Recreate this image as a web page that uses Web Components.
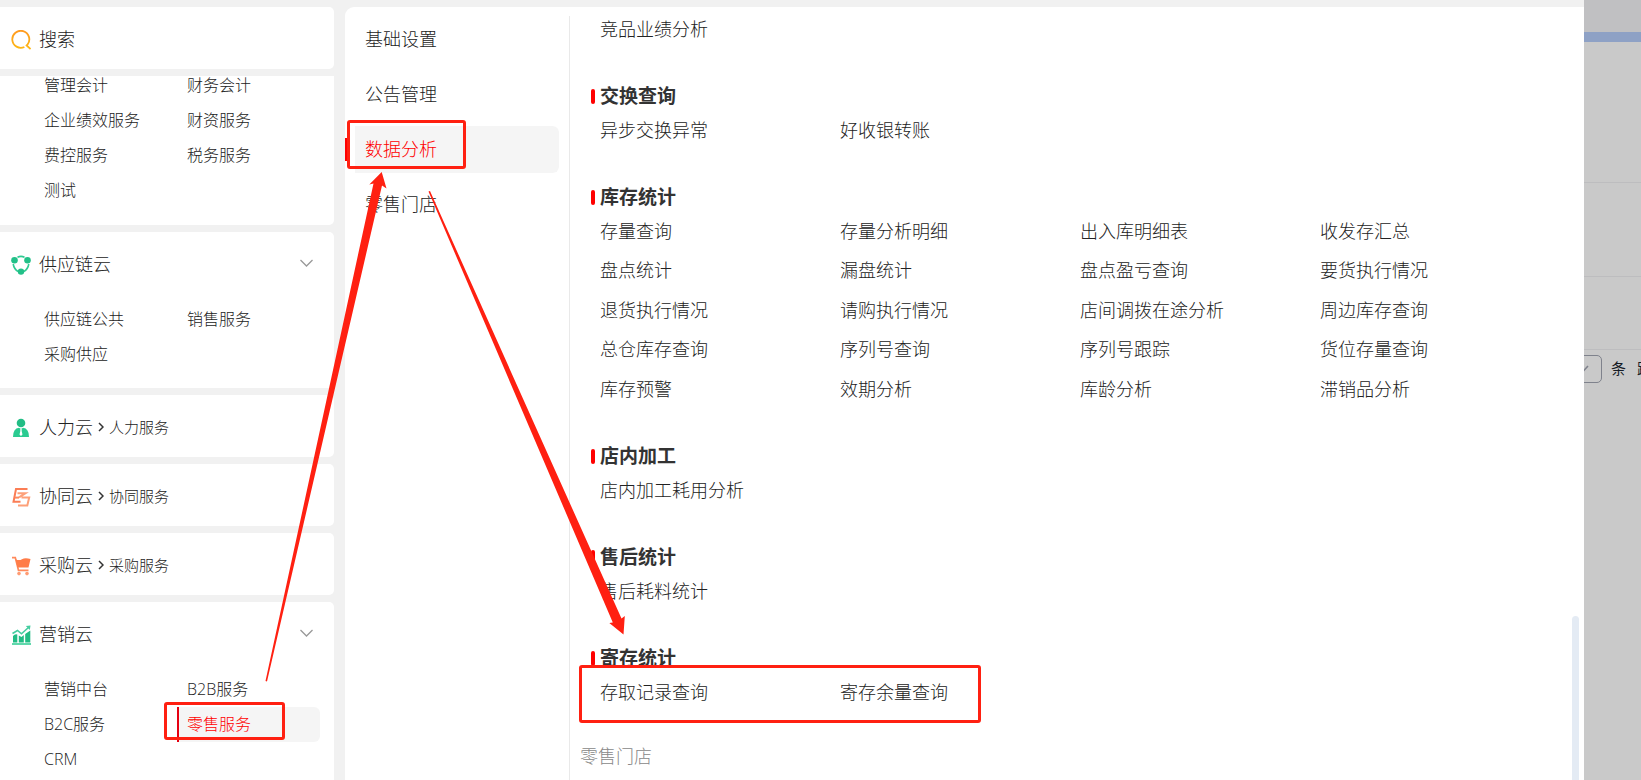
<!DOCTYPE html>
<html lang="zh-CN">
<head>
<meta charset="utf-8">
<title>数据分析</title>
<style>
    html, body { height: 100%; margin: 0; }
    body {
        display: flex;
        overflow: hidden;
        position: relative;
        background: #f1f1f1;
        color: #222;
        font-family: "Open Sans", "Noto Sans CJK SC", sans-serif;
        font-weight: 300;
        font-size: 18px;
    }
    nav-drawer { flex: 1; min-width: 0; }
</style>
</head>
<body>
<nav-drawer>
    <search-card slot="sidebar">搜索</search-card>
    <cloud-card slot="sidebar" scrolled>
        <a href="#">管理会计</a><a href="#">财务会计</a>
        <a href="#">企业绩效服务</a><a href="#">财资服务</a>
        <a href="#">费控服务</a><a href="#">税务服务</a>
        <a href="#">测试</a>
    </cloud-card>
    <cloud-card slot="sidebar" name="供应链云" icon="supply" open>
        <a href="#">供应链公共</a><a href="#">销售服务</a>
        <a href="#">采购供应</a>
    </cloud-card>
    <cloud-card slot="sidebar" name="人力云" icon="person" service="人力服务"></cloud-card>
    <cloud-card slot="sidebar" name="协同云" icon="collab" service="协同服务"></cloud-card>
    <cloud-card slot="sidebar" name="采购云" icon="cart" service="采购服务"></cloud-card>
    <cloud-card slot="sidebar" name="营销云" icon="chart" open>
        <a href="#">营销中台</a><a href="#">B2B服务</a>
        <a href="#">B2C服务</a><a href="#" class="active">零售服务</a>
        <a href="#">CRM</a>
    </cloud-card>

    <side-menu slot="menu">
        <a href="#">基础设置</a>
        <a href="#">公告管理</a>
        <a href="#" class="active">数据分析</a>
        <a href="#">零售门店</a>
    </side-menu>

    <menu-section>
        <a href="#">竞品业绩分析</a>
    </menu-section>
    <menu-section heading="交换查询">
        <a href="#">异步交换异常</a><a href="#">好收银转账</a>
    </menu-section>
    <menu-section heading="库存统计">
        <a href="#">存量查询</a><a href="#">存量分析明细</a><a href="#">出入库明细表</a><a href="#">收发存汇总</a>
        <a href="#">盘点统计</a><a href="#">漏盘统计</a><a href="#">盘点盈亏查询</a><a href="#">要货执行情况</a>
        <a href="#">退货执行情况</a><a href="#">请购执行情况</a><a href="#">店间调拨在途分析</a><a href="#">周边库存查询</a>
        <a href="#">总仓库存查询</a><a href="#">序列号查询</a><a href="#">序列号跟踪</a><a href="#">货位存量查询</a>
        <a href="#">库存预警</a><a href="#">效期分析</a><a href="#">库龄分析</a><a href="#">滞销品分析</a>
    </menu-section>
    <menu-section heading="店内加工">
        <a href="#">店内加工耗用分析</a>
    </menu-section>
    <menu-section heading="售后统计">
        <a href="#">售后耗料统计</a>
    </menu-section>
    <menu-section heading="寄存统计">
        <a href="#">存取记录查询</a><a href="#">寄存余量查询</a>
    </menu-section>
    <group-title>零售门店</group-title>
</nav-drawer>
<page-behind></page-behind>
<mark-layer></mark-layer>

<script>
const ICONS = {
    search: `
        <defs><linearGradient id="s" x2="0" y2="1"><stop stop-color="#ff9a1f"/><stop offset="1" stop-color="#fdb713"/></linearGradient></defs>
        <path d="M13.4 17A8.5 8.5 0 1 1 16.6 14.4L15.6 15.4L19.6 19" fill="none" stroke="url(#s)" stroke-width="1.8"/>`,
    supply: `
        <path d="M6.500 2.300Q10 .5 13.500 2.300M2.200 9Q3 14 7 16.500M17.800 9Q17 14 13 16.500" fill="none" stroke="#2fcb93" stroke-width="1.600"/>
        <circle cx="3.500" cy="5.300" r="3.300" fill="#22c088"/><circle cx="16.500" cy="5.300" r="3.300" fill="#22c088"/><circle cx="10" cy="16.600" r="3.200" fill="#22c088"/>`,
    person: `
        <circle cx="10" cy="5" r="4.300" fill="#22bd85"/>
        <path d="M2 19Q2 10.500 8 9.800L10 11L12 9.800Q18 10.500 18 19Z" fill="#2bcb91"/>
        <path d="M9 11.300H11L10.600 12.800L11.500 16.500L10 18L8.500 16.500L9.400 12.800Z" fill="#fff"/>`,
    collab: `
        <g fill="none" stroke-width="2"><path d="M16.500 2H5L2.500 14.800H9.500" stroke="#fb7d55"/>
        <path d="M6.500 6.200H14.500L8 10.400M10.500 10.400H18.200L16.300 18.500H7" stroke="#fda078"/><path d="M4 10.600H8" stroke="#fb8a60"/></g>`,
    cart: `
        <path d="M1 1.600H4.300L7.500 14.400H17.500" fill="none" stroke="#ff8a5c" stroke-width="1.700"/>
        <path d="M4.500 3.200Q8 5 11 3.200T19.500 3L17.500 11.500H6.500Z" fill="#ff7c48"/>
        <circle cx="8" cy="17.600" r="1.800" fill="#ff9c74"/><circle cx="16" cy="17.600" r="1.800" fill="#ff9c74"/>`,
    chart: `
        <path d="M1 19H20" stroke="#2bcb91" stroke-width="1.500"/>
        <path d="M2 11Q4 8.500 6.300 9.500V17.500H2ZM7.800 10.500L10.500 12L12.800 10V17.500H7.800ZM14.200 9L19.300 5.500V17.500H14.200Z" fill="#22bd85"/>
        <path d="M1.500 8.500L6.500 5.500L10.500 8.800L18 2" fill="none" stroke="#45cda0" stroke-width="1.600"/>
        <path d="M14.800 1L19.500 .5L18.800 5Z" fill="#45cda0"/>`
};

const icon = (name) => `<svg class="icon" width="20" height="20" viewBox="0 0 20 20" aria-hidden="true">${ICONS[name]}</svg>`;

const HEADER_STYLE = `
    :host { display: block; flex: none; background: #fff; border-radius: 0 5px 5px 0; }
    .header {
        display: flex;
        align-items: center;
        box-sizing: border-box;
        width: 100%;
        height: 62px;
        padding: 0 21px 0 11px;
        border: 0;
        background: none;
        color: inherit;
        font: inherit;
        text-align: left;
    }
    .icon { flex: none; margin: 4px 8px 0 0; }
`;

class NavDrawer extends HTMLElement {
    constructor() {
        super();
        this.attachShadow({ mode: 'open' }).innerHTML = `
            <style>
                :host { display: flex; gap: 11px; height: 100%; box-sizing: border-box; padding-top: 7px; }
                nav { display: flex; flex-direction: column; gap: 7px; flex: 0 0 334px; overflow: hidden; }
                main { display: flex; flex: 1; min-width: 0; background: #fff; border-top-left-radius: 9px; overflow: hidden; }
                .content { flex: 1; min-width: 0; padding: 2px 12px 0 30px; }
                .thumb { align-self: flex-end; flex: none; width: 7px; height: 164px; margin-right: 5px; background: #e4ebf4; border-radius: 4px 4px 0 0; }
            </style>
            <nav><slot name="sidebar"></slot></nav>
            <main>
                <slot name="menu"></slot>
                <div class="content"><slot></slot></div>
                <div class="thumb"></div>
            </main>
        `;
    }
}

class SearchCard extends HTMLElement {
    constructor() {
        super();
        this.attachShadow({ mode: 'open' }).innerHTML = `
            <style>${HEADER_STYLE}</style>
            <button class="header" type="button">${icon('search')}<slot></slot></button>
        `;
    }
}

class CloudCard extends HTMLElement {
    constructor() {
        super();
        this.attachShadow({ mode: 'open' });
    }

    connectedCallback() {
        this.render();
    }

    renderHeader() {
        const name = this.getAttribute('name');
        if (!name) return '';

        const service = this.getAttribute('service');
        const crumb = service ? `
            <svg class="sep" width="6" height="10" viewBox="0 0 6 10"><path d="M1 1L5 5L1 9" fill="none" stroke="#333" stroke-width="1.500"/></svg>
            <span class="service">${service}</span>` : '';
        const arrow = this.hasAttribute('open') ? `
            <svg class="arrow" width="13" height="8" viewBox="0 0 13 8"><path d="M.5 1L6.500 7L12.500 1" fill="none" stroke="#999" stroke-width="1.300"/></svg>` : '';

        return `<button class="header" type="button">${icon(this.getAttribute('icon'))}<span>${name}</span>${crumb}${arrow}</button>`;
    }

    render() {
        this.shadowRoot.innerHTML = `
            <style>
                ${HEADER_STYLE}
                :host([open]) { padding-bottom: 16px; }
                :host([open]) .header { margin-bottom: 8px; }
                /* list scrolled under the search card: its top is cut */
                :host([scrolled]) {
                    display: flex;
                    flex-direction: column;
                    justify-content: flex-end;
                    box-sizing: border-box;
                    height: 149px;
                    padding-bottom: 17px;
                    overflow: hidden;
                    border-radius: 0 0 5px 0;
                }
                .sep { flex: none; margin: 2px 5px 0; }
                .service { font-size: 15px; }
                .arrow { margin-left: auto; }
                .links { display: grid; grid-template-columns: 1fr 1fr; padding: 0 14px 0 34px; font-size: 16px; }
                ::slotted(a) { padding-left: 8px; border-left: 2px solid transparent; line-height: 35px; color: inherit; text-decoration: none; }
                ::slotted(a.active) { color: #f00; background: #f5f5f5; border-color: #e60012; border-radius: 0 6px 6px 0; }
            </style>
            ${this.renderHeader()}
            <div class="links"><slot></slot></div>
        `;
    }
}

class SideMenu extends HTMLElement {
    constructor() {
        super();
        this.attachShadow({ mode: 'open' }).innerHTML = `
            <style>
                :host { display: flex; flex: 0 0 225px; box-sizing: border-box; padding-top: 9px; }
                nav { display: flex; flex-direction: column; gap: 8px; flex: 1; padding-right: 10px; border-right: 1px solid #e9e9e9; }
                ::slotted(a) { margin-left: 10px; padding-left: 10px; line-height: 47px; border-radius: 6px; color: inherit; text-decoration: none; }
                ::slotted(a.active) {
                    color: #f00;
                    background: linear-gradient(#f00, #f00) left center / 4px 23px no-repeat border-box, #f5f5f5 padding-box;
                    border-left: 10px solid transparent;
                    margin-left: 0;
                }
            </style>
            <nav><slot></slot></nav>
        `;
    }
}

class MenuSection extends HTMLElement {
    constructor() {
        super();
        this.attachShadow({ mode: 'open' });
    }

    connectedCallback() {
        const heading = this.getAttribute('heading');
        this.shadowRoot.innerHTML = `
            <style>
                :host { display: block; margin-bottom: 34px; }
                h3 { display: flex; align-items: center; gap: 5px; margin: 0 0 0 -9px; font-size: 19px; font-weight: 700; line-height: 28px; color: #333; }
                h3::before { content: ""; width: 4px; height: 15px; border-radius: 2px; background: #f00; }
                .grid { display: grid; grid-template-columns: repeat(4, 1fr); grid-auto-rows: 39px 40px; align-items: center; }
                ::slotted(a) { padding-bottom: 2px; color: inherit; text-decoration: none; white-space: nowrap; }
            </style>
            ${heading ? `<h3>${heading}</h3>` : ''}
            <div class="grid"><slot></slot></div>
        `;
    }
}

class GroupTitle extends HTMLElement {
    constructor() {
        super();
        this.attachShadow({ mode: 'open' }).innerHTML = `
            <style>
                :host { display: block; margin-left: -20px; line-height: 22px; color: #888; }
            </style>
            <slot></slot>
        `;
    }
}

// dimmed page that stays visible to the right of the drawer
class PageBehind extends HTMLElement {
    constructor() {
        super();
        this.attachShadow({ mode: 'open' }).innerHTML = `
            <style>
                :host { display: block; flex: 0 0 57px; overflow: hidden; background: #c9c9c9; color: #151b25; font-size: 15px; font-weight: 400; }
                .top { height: 32px; background: #c0c0c2; }
                .bar { height: 10px; background: #8ea1c5; }
                .row { box-sizing: border-box; border-bottom: 1px solid #bdbdbf; }
                .row.a { height: 141px; }
                .row.b { height: 94px; }
                .row.c { height: 73px; }
                .pager { display: flex; align-items: center; justify-content: flex-end; margin: 5px -11px 0 -60px; line-height: 26px; white-space: nowrap; }
                .pick { display: grid; align-items: center; margin-right: 9px; }
                select { grid-area: 1 / 1; appearance: none; width: 64px; height: 28px; border: 1px solid #7f828c; border-radius: 5px; background: none; }
                svg { grid-area: 1 / 1; justify-self: end; margin-right: 13px; }
                span { padding-bottom: 2px; }
                .jump { margin-left: 11px; }
            </style>
            <div class="top"></div>
            <div class="bar"></div>
            <div class="row a"></div>
            <div class="row b"></div>
            <div class="row c"></div>
            <div class="pager">
                <div class="pick">
                    <select aria-label="每页条数"></select>
                    <svg width="12" height="8" viewBox="0 0 12 8"><path d="M1 1L6 6.500L11 1" fill="none" stroke="#7f828c" stroke-width="1.600"/></svg>
                </div>
                <span>条</span><span class="jump">跳</span>
            </div>
        `;
    }
}

// red boxes and arrows drawn over the page
class MarkLayer extends HTMLElement {
    constructor() {
        super();
        this.attachShadow({ mode: 'open' }).innerHTML = `
            <style>
                :host { position: absolute; inset: 0; pointer-events: none; }
                svg { display: block; width: 100%; height: 100%; }
            </style>
            <svg aria-hidden="true">
                <g fill="none" stroke="#ff2011" stroke-width="3">
                    <rect x="348.500" y="121.500" width="116" height="46" rx="1.500"/>
                    <rect x="165.500" y="703.500" width="118" height="35" rx="1.500"/>
                    <rect x="580.500" y="666.500" width="399" height="55" rx="1.500"/>
                </g>
                <g fill="#ff2011">
                    <path d="M265.500 681L373.500 183.500L369.300 184.500L381.700 172L386.500 188.500L382 185.500L267 681.500Z"/>
                    <path d="M428.500 191.500L612.800 622.500L609.300 623L623.500 634.500L624.800 616L621.500 618.500L430 191Z"/>
                </g>
            </svg>
        `;
    }
}

customElements.define('nav-drawer', NavDrawer);
customElements.define('search-card', SearchCard);
customElements.define('cloud-card', CloudCard);
customElements.define('side-menu', SideMenu);
customElements.define('menu-section', MenuSection);
customElements.define('group-title', GroupTitle);
customElements.define('page-behind', PageBehind);
customElements.define('mark-layer', MarkLayer);
</script>
</body>
</html>
